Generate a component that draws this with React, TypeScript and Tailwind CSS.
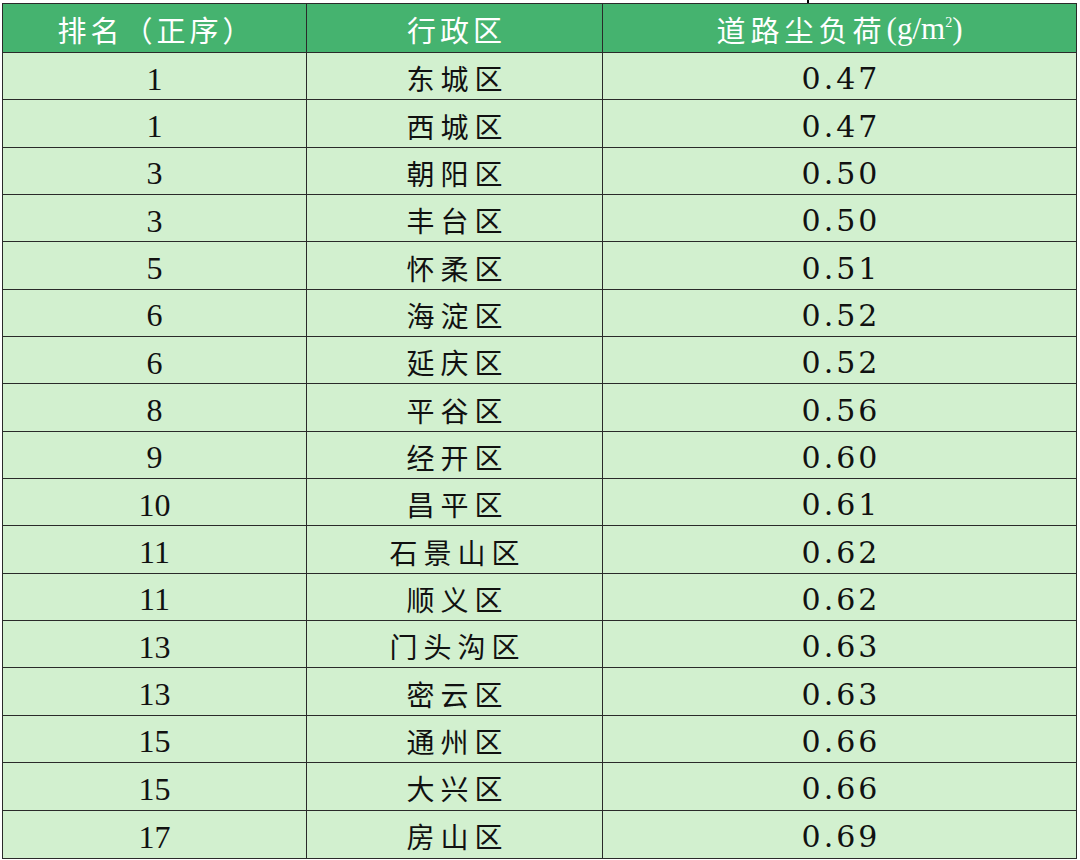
const rows: [string, string, string][] = [
  ['1', '东城区', '0.47'],
  ['1', '西城区', '0.47'],
  ['3', '朝阳区', '0.50'],
  ['3', '丰台区', '0.50'],
  ['5', '怀柔区', '0.51'],
  ['6', '海淀区', '0.52'],
  ['6', '延庆区', '0.52'],
  ['8', '平谷区', '0.56'],
  ['9', '经开区', '0.60'],
  ['10', '昌平区', '0.61'],
  ['11', '石景山区', '0.62'],
  ['11', '顺义区', '0.62'],
  ['13', '门头沟区', '0.63'],
  ['13', '密云区', '0.63'],
  ['15', '通州区', '0.66'],
  ['15', '大兴区', '0.66'],
  ['17', '房山区', '0.69'],
]

const cjk = 'font-["Noto_Sans_CJK_SC",sans-serif]'

export default function App() {
  return (
    <div className="relative w-[1080px] h-[860px] bg-white pt-[3px] pl-[2px] overflow-hidden">
      {/* stray mark above the header */}
      <div className="absolute left-[807px] top-0 w-[2px] h-[3px] bg-black" />

      <div className="w-[1075px] border border-[#2a2a2a] grid grid-cols-[304px_296px_1fr] grid-rows-[49px_repeat(17,47.35px)] text-[#111]">
        {/* header */}
        <div className={`bg-[#45b36f] border-r border-b border-[#2a2a2a] flex items-center justify-center pt-[3px] pl-[4px] text-white text-[29px] tracking-[4px] ${cjk}`}>
          排名（正序）
        </div>
        <div className={`bg-[#45b36f] border-r border-b border-[#2a2a2a] flex items-center justify-center pt-[3px] pl-[4px] text-white text-[29px] tracking-[4px] ${cjk}`}>
          行政区
        </div>
        <div className="bg-[#45b36f] border-b border-[#2a2a2a] flex items-center justify-center pt-[3px] text-white text-[29px]">
          <span className={`tracking-[5px] ${cjk}`}>道路尘负荷</span>
          <span className='font-["Liberation_Serif",serif] text-[31px]'>
            (g/m<sup className="text-[14px] -top-[12px]">2</sup>)
          </span>
        </div>

        {/* body */}
        {rows.map(([rank, district, value], i) => {
          const last = i === rows.length - 1
          const b = last ? '' : 'border-b'
          return [
            <div
              key={`r${i}`}
              className={`bg-[#d2f0cf] border-r ${b} border-[#2a2a2a] flex items-center justify-center pt-[5px] text-[32px] font-["Liberation_Serif",serif]`}
            >
              {rank}
            </div>,
            <div
              key={`d${i}`}
              className={`bg-[#d2f0cf] border-r ${b} border-[#2a2a2a] flex items-center justify-center pt-[4px] pl-[6px] text-[28px] tracking-[6px] ${cjk}`}
            >
              {district}
            </div>,
            <div
              key={`v${i}`}
              className={`bg-[#d2f0cf] ${b} border-[#2a2a2a] flex items-center justify-center pt-[5px] pl-[3px] text-[30px] tracking-[3px] font-["DejaVu_Serif",serif]`}
            >
              {value}
            </div>,
          ]
        })}
      </div>
    </div>
  )
}
